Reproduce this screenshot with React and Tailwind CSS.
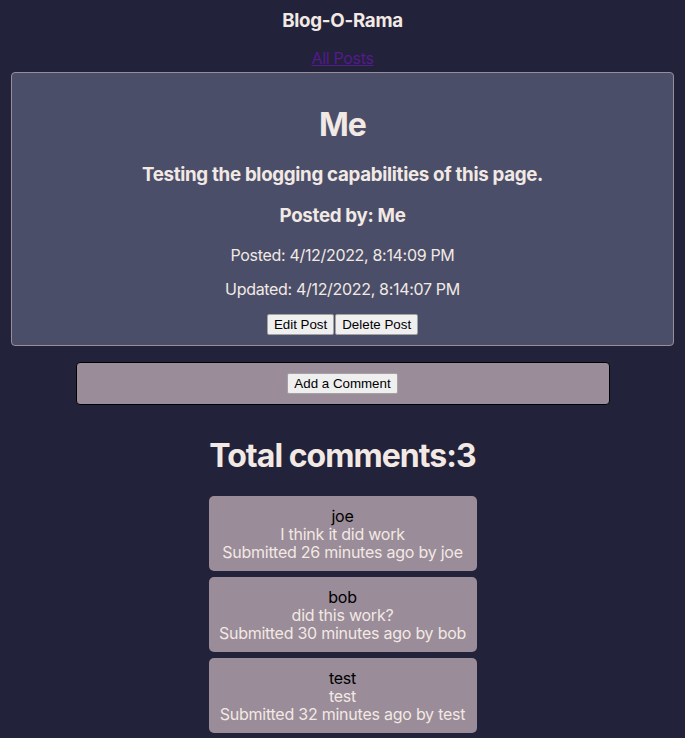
import React from 'react';

const post = {
  title: 'Me',
  body: 'Testing the blogging capabilities of this page.',
  author: 'Me',
  posted: '4/12/2022, 8:14:09 PM',
  updated: '4/12/2022, 8:14:07 PM',
};

const comments = [
  { name: 'joe', text: 'I think it did work', ago: '26 minutes' },
  { name: 'bob', text: 'did this work?', ago: '30 minutes' },
  { name: 'test', text: 'test', ago: '32 minutes' },
];

function NativeButton({ children }) {
  return (
    <button className="bg-[#efefef] border border-[#a3a3a3] rounded-[2px] px-[6px] h-[21px] text-[13.33px] leading-[15px] text-black tracking-normal font-['Liberation_Sans',Arial,sans-serif]">
      {children}
    </button>
  );
}

function CommentCard({ c }) {
  return (
    <div className="w-[268px] bg-[#9a8c98] rounded-[5px] py-[10.5px] text-center text-[16px] leading-[18px] tracking-[-0.015em]">
      <div className="text-black">{c.name}</div>
      <div className="text-[#f2e9e4]">{c.text}</div>
      <div className="text-[#f2e9e4]">Submitted {c.ago} ago by {c.name}</div>
    </div>
  );
}

export default function App() {
  return (
    <div className="min-h-screen bg-[#22223b] text-[#f2e9e4] font-['Inter',sans-serif] pt-[10px] pb-[10px]">
      <h3 className="text-center text-[18.72px] font-bold leading-[22.6px] mb-[16px] tracking-[-0.015em]">Blog-O-Rama</h3>
      <div className="text-center leading-[19.4px] tracking-[-0.02em]">
        <a href="#" className="text-[#551a8b] underline">All Posts</a>
      </div>

      <div className="mx-[11px] mt-[4px] border border-[#9a8c98] rounded-[4px] bg-[#4a4e69] p-[10px] text-center">
        <h1 className="text-[32px] font-bold leading-[38.7px] mt-[23px] mb-[19px] tracking-[-0.03em]">{post.title}</h1>
        <h3 className="text-[18.72px] font-bold leading-[22.6px] mb-[19px] tracking-[-0.016em]">{post.body}</h3>
        <h3 className="text-[18.72px] font-bold leading-[22.6px] mb-[18px] tracking-[-0.016em]">Posted by: {post.author}</h3>
        <p className="leading-[19.4px] mb-[15px] tracking-[-0.02em]">Posted: {post.posted}</p>
        <p className="leading-[19.4px] mb-[14px] tracking-[-0.02em]">Updated: {post.updated}</p>
        <div className="flex justify-center gap-[1px]">
          <NativeButton>Edit Post</NativeButton>
          <NativeButton>Delete Post</NativeButton>
        </div>
      </div>

      <div className="w-[534px] mx-auto mt-[16px] bg-[#9a8c98] border border-black rounded-[4px] py-[10px] flex justify-center">
        <NativeButton>Add a Comment</NativeButton>
      </div>

      <h1 className="text-center text-[32px] font-bold leading-[38.7px] mt-[32px] mb-[21px] tracking-[-0.03em]">
        Total comments:{comments.length}
      </h1>

      <div className="flex flex-col items-center gap-[6px]">
        {comments.map((c) => (
          <CommentCard key={c.name} c={c} />
        ))}
      </div>
    </div>
  );
}
